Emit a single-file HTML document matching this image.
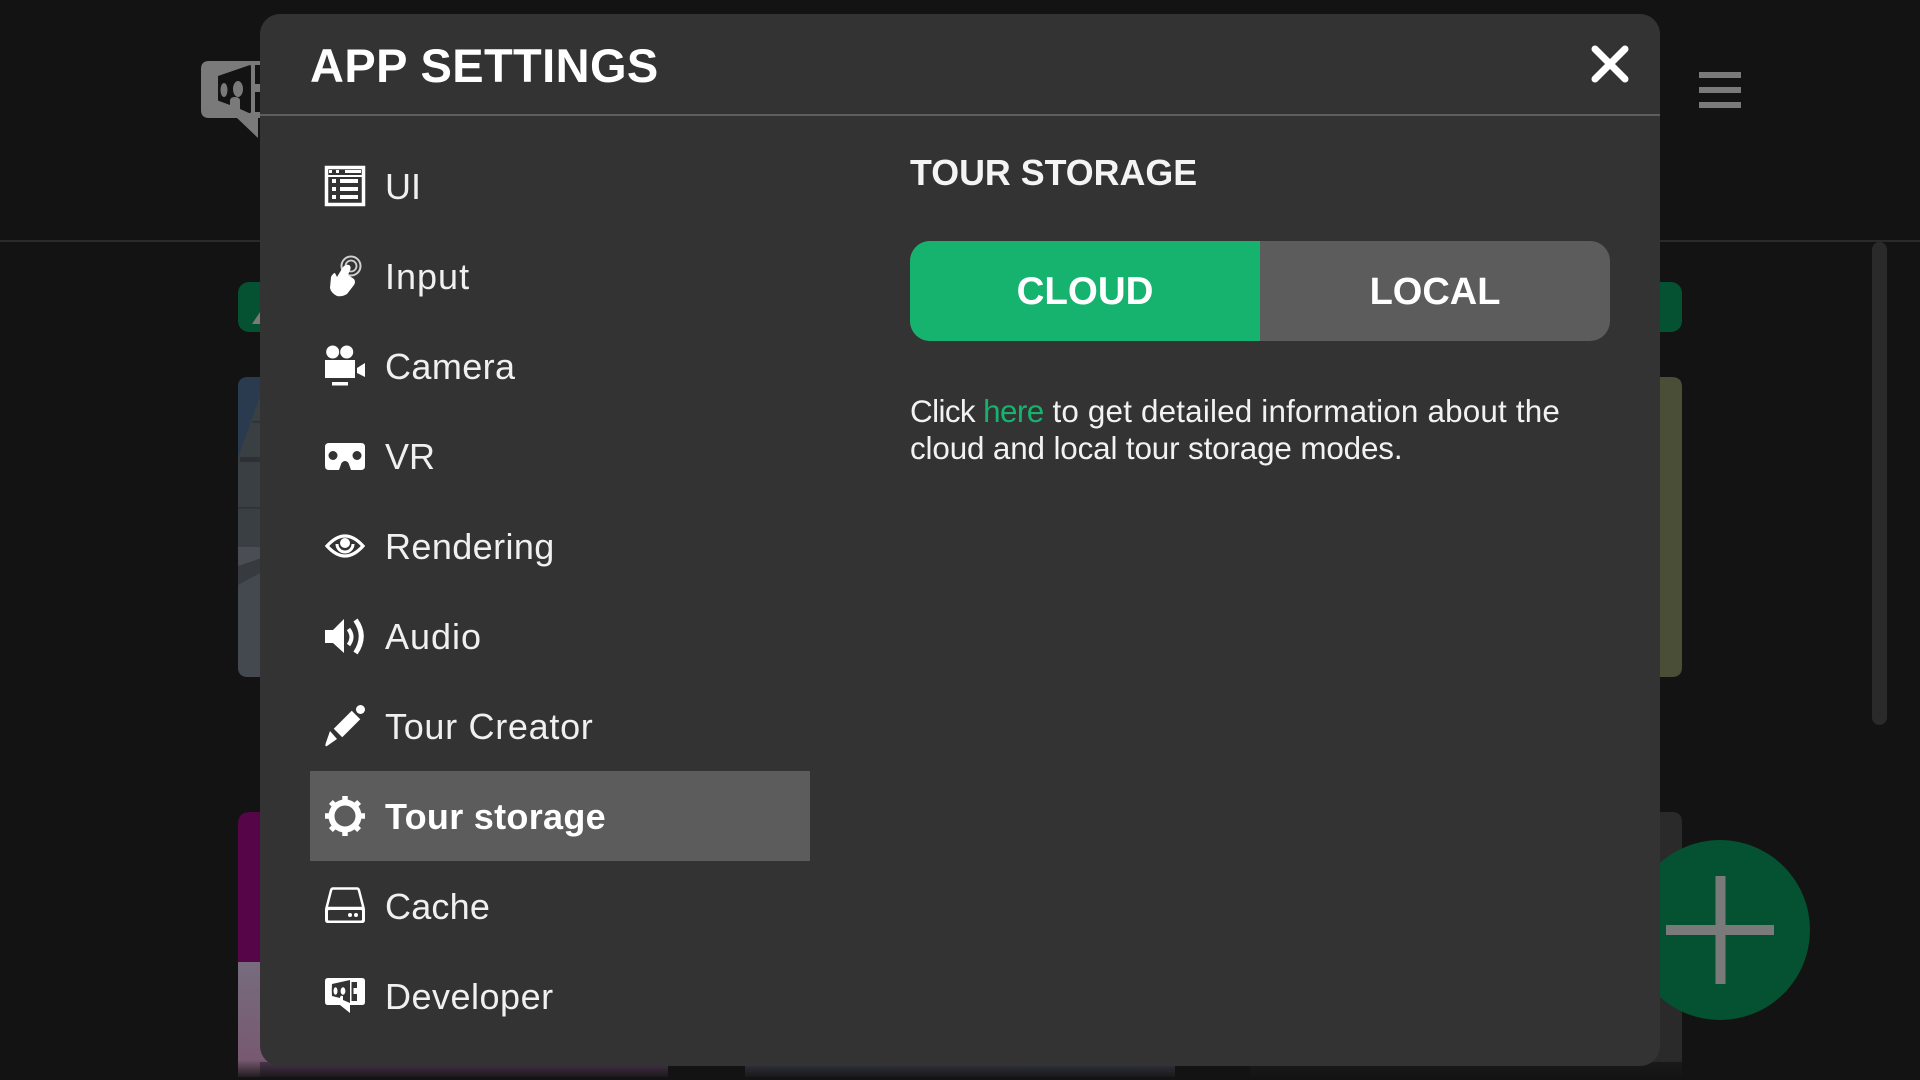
<!DOCTYPE html>
<html lang="en">
<head>
<meta charset="utf-8">
<title>App Settings</title>
<style>
html,body{margin:0;padding:0;width:1920px;height:1080px;overflow:hidden;background:#131313;}
*{box-sizing:border-box;}
body{font-family:"Liberation Sans",sans-serif;color:#f2f2f2;position:relative;}
.a{position:absolute;}
.t{position:absolute;white-space:nowrap;}
.menu{position:absolute;left:385px;font-size:36px;line-height:92px;height:90px;white-space:nowrap;color:#f0f0f0;}
svg{position:absolute;overflow:visible;}
</style>
</head>
<body>
<!-- background page -->
<div class="a" style="left:0;top:240px;width:1920px;height:2px;background:#2a2a2a"></div>
<div class="a" style="left:238px;top:282px;width:1444px;height:50px;border-radius:11px;background:#055232"></div>
<svg style="left:0;top:0" width="1920" height="1080">
  <polygon points="252,324 260,312 260,324" fill="#7a7a7a"/>
  <!-- logo -->
  <path d="M209 61H262V118H258V138L237 118H209Q201 118 201 110V69Q201 61 209 61Z" fill="#7a7a7a"/>
  <path d="M218 76L250 65Q251 65 251 67V112Q251 113 249 113L240 109V101Q240 97 235 97Q230 97 230 101V105L219 101Q218 101 218 99Z" fill="#131313"/>
  <ellipse cx="224" cy="90" rx="3.500" ry="7" fill="#7a7a7a"/>
  <ellipse cx="238" cy="89" rx="5" ry="8" fill="#7a7a7a"/>
  <path d="M255 65H262V84H255ZM255 92H262V112H255Z" fill="#131313"/>
  <!-- hamburger -->
  <rect x="1699" y="72" width="42" height="6" fill="#7a7a7a"/>
  <rect x="1699" y="87" width="42" height="6" fill="#7a7a7a"/>
  <rect x="1699" y="102" width="42" height="6" fill="#7a7a7a"/>
  <!-- scrollbar -->
  <rect x="1872" y="242" width="15" height="483" rx="7.500" fill="#2a2a2a"/>
  <!-- left image sliver -->
  <defs>
    <clipPath id="c1"><path d="M248 377H262V677H248Q238 677 238 667V387Q238 377 248 377Z"/></clipPath>
    <linearGradient id="fade" x1="0" y1="0" x2="0" y2="1"><stop offset="0" stop-color="#131313" stop-opacity="0"/><stop offset="1" stop-color="#131313"/></linearGradient>
    <linearGradient id="pale" x1="0" y1="0" x2="0" y2="1"><stop offset="0" stop-color="#776c7e"/><stop offset="1" stop-color="#77566e"/></linearGradient>
  </defs>
  <g clip-path="url(#c1)">
    <rect x="238" y="377" width="24" height="300" fill="#3a3f43"/>
    <polygon points="238,377 262,377 262,391 238,458" fill="#2a3b50"/>
    <rect x="240" y="457" width="22" height="5" fill="#2d3034"/>
    <rect x="252" y="421" width="10" height="1.500" fill="#2c2f33"/>
    <rect x="238" y="507" width="24" height="1.500" fill="#2e3135"/>
    <polygon points="238,547 262,547 262,558 238,566" fill="#4a4d53"/>
    <polygon points="238,566 262,558 262,572 238,585" fill="#373a3f"/>
    <polygon points="238,585 262,572 262,677 238,677" fill="#44484f"/>
  </g>
  <!-- right image sliver -->
  <path d="M1655 377H1672Q1682 377 1682 387V667Q1682 677 1672 677H1655Z" fill="#4a4e36"/>
  <!-- bottom row -->
  <path d="M250 812H270V962H238V824Q238 812 250 812Z" fill="#550548"/>
  <rect x="238" y="962" width="32" height="115" fill="url(#pale)"/>
  <rect x="260" y="1062" width="408" height="15" fill="#4d3750"/>
  <rect x="745" y="1062" width="430" height="15" fill="#383943"/>
  <path d="M1650 812H1672Q1682 812 1682 822V1077H1650Z" fill="#2a2a2a"/>
  <rect x="1250" y="1062" width="432" height="15" fill="#1a1a1a"/>
  <rect x="230" y="1060" width="1460" height="20" fill="url(#fade)"/>
  <!-- FAB -->
  <circle cx="1720" cy="930" r="90" fill="#055232"/>
  <rect x="1666" y="925" width="108" height="10" fill="#7a7a7a"/>
  <rect x="1715.500" y="876" width="10" height="108" fill="#7a7a7a"/>
</svg>

<!-- modal -->
<div class="a" style="left:260px;top:14px;width:1400px;height:1052px;background:#333;border-radius:20px"></div>
<div class="a" style="left:260px;top:114px;width:1400px;height:2px;background:#5e5e5e"></div>
<div class="t" style="left:310px;top:36px;font-size:47px;line-height:60px;font-weight:700;color:#fff;letter-spacing:.4px">APP SETTINGS</div>
<svg style="left:0;top:0" width="1920" height="1080">
  <path d="M1595 49L1625 79M1625 49L1595 79" stroke="#fff" stroke-width="7" stroke-linecap="round" fill="none"/>
</svg>

<!-- active row -->
<div class="a" style="left:310px;top:771px;width:500px;height:90px;background:#5c5c5c"></div>

<div class="menu" style="top:141px">UI</div>
<div class="menu" style="top:231px;letter-spacing:1px">Input</div>
<div class="menu" style="top:321px;letter-spacing:.4px">Camera</div>
<div class="menu" style="top:411px">VR</div>
<div class="menu" style="top:501px;letter-spacing:.4px">Rendering</div>
<div class="menu" style="top:591px;letter-spacing:1px">Audio</div>
<div class="menu" style="top:681px;letter-spacing:.7px">Tour Creator</div>
<div class="menu" style="top:771px;font-weight:700;color:#fff;letter-spacing:.3px">Tour storage</div>
<div class="menu" style="top:861px;letter-spacing:.2px">Cache</div>
<div class="menu" style="top:951px;letter-spacing:.5px">Developer</div>

<svg style="left:0;top:0" width="1920" height="1080" fill="#fff">
  <!-- UI -->
  <rect x="326.500" y="167.500" width="37" height="37" fill="none" stroke="#fff" stroke-width="3.500"/>
  <rect x="329" y="170" width="3" height="3"/><rect x="336" y="170" width="3" height="3"/><rect x="345" y="170" width="16" height="3"/>
  <rect x="328" y="175" width="34" height="2"/>
  <rect x="332" y="179" width="4" height="4"/><rect x="340" y="179" width="18" height="4"/>
  <rect x="332" y="187" width="4" height="4"/><rect x="340" y="187" width="18" height="4"/>
  <rect x="332" y="195" width="4" height="4"/><rect x="340" y="195" width="18" height="4"/>
  <!-- Input -->
  <circle cx="351" cy="266" r="9.500" fill="none" stroke="#d0d0d0" stroke-width="2"/>
  <circle cx="351" cy="266" r="5.500" fill="none" stroke="#d0d0d0" stroke-width="1.800"/>
  <path d="M343 267Q346 264 349 265Q351 266 350.500 269L348 275L354 279Q356 282 354 285L347 294Q342 297 337 296Q331 293 330 288L331 277Q333 273 335 273L337 277Z"/>
  <!-- Camera -->
  <circle cx="332.700" cy="352" r="6.500"/><circle cx="346.700" cy="352" r="6.500"/>
  <rect x="325" y="360" width="30" height="18"/>
  <polygon points="357,368 365,363 365,377 357,373"/>
  <rect x="332" y="382" width="16" height="3.500"/>
  <!-- VR -->
  <path fill-rule="evenodd" d="M329 443H361Q365 443 365 447V466Q365 470 361 470H351L348.500 463Q345 459 341.500 463L339 470H329Q325 470 325 466V447Q325 443 329 443ZM333 451A4.500 4.500 0 1 0 333 460A4.500 4.500 0 1 0 333 451ZM357 451A4.500 4.500 0 1 0 357 460A4.500 4.500 0 1 0 357 451Z"/>
  <!-- Eye -->
  <path d="M327 546Q345 526 363 546Q345 566 327 546Z" fill="none" stroke="#fff" stroke-width="3.200"/>
  <path d="M337 544A8 8 0 1 0 353 544" fill="none" stroke="#fff" stroke-width="3"/>
  <circle cx="345" cy="543" r="5"/>
  <!-- Audio -->
  <path d="M325 630H333L344 619V653L333 643H325Z"/>
  <path d="M348.500 629Q354.500 637 348.500 645" fill="none" stroke="#fff" stroke-width="4"/>
  <path d="M355.500 620Q367 636 355.500 653" fill="none" stroke="#fff" stroke-width="5"/>
  <!-- Pencil -->
  <path d="M338 733L356 715" stroke="#fff" stroke-width="12" fill="none"/>
  <circle cx="360.500" cy="709.500" r="4.500"/>
  <path d="M330 731L337 739L327 746Q325 747 325.500 744Z"/>
  <!-- Gear -->
  <circle cx="345" cy="816" r="13.500" fill="none" stroke="#fff" stroke-width="6"/>
  <g stroke="#fff" stroke-width="5.500" stroke-linecap="butt">
    <path d="M345 796V803M345 829V836M325 816H332M358 816H365M330.900 801.900L336 807M354 825L359.100 830.100M359.100 801.900L354 807M336 825L330.900 830.100"/>
  </g>
  <!-- Cache -->
  <path d="M333 888.500H357Q358.500 888.500 359 890.500L363.500 908H326.500L331 890.500Q331.500 888.500 333 888.500Z" fill="none" stroke="#fff" stroke-width="2.500"/>
  <path fill-rule="evenodd" d="M328 907H362Q365 907 365 910V920Q365 923 362 923H328Q325 923 325 920V910Q325 907 328 907ZM329 910Q328 910 328 911V919.500Q328 920.500 329 920.500H361Q362 920.500 362 919.500V911Q362 910 361 910Z"/>
  <circle cx="350" cy="915" r="2"/><circle cx="356" cy="915" r="2"/>
  <!-- Developer -->
  <path d="M328 978H362Q365 978 365 981V1002Q365 1005 362 1005H350L350 1013L340 1005H328Q325 1005 325 1002V981Q325 978 328 978Z"/>
  <path d="M332 984L350 980V1003L343 1000V996Q340 995 340 998L332 996Q331.500 990 332 984Z" fill="#333"/>
  <ellipse cx="335.500" cy="991" rx="2" ry="3.800"/>
  <ellipse cx="343" cy="991" rx="2.400" ry="3.800"/>
  <path d="M351.500 982H357V988H353.500V994H357V1001H351.500Z" fill="#333"/>
</svg>

<!-- right pane -->
<div class="t" style="left:910px;top:151px;font-size:35.800px;line-height:44px;font-weight:700;color:#f4f4f4">TOUR STORAGE</div>
<div class="a" style="left:910px;top:241px;width:700px;height:100px;border-radius:20px;overflow:hidden;background:#5c5c5c">
  <div class="a" style="left:0;top:0;width:350px;height:100px;background:#16b36e"></div>
  <div class="a" style="left:0;top:1px;width:350px;height:100px;line-height:100px;text-align:center;font-size:38.500px;font-weight:700;color:#fff">CLOUD</div>
  <div class="a" style="left:350px;top:1px;width:350px;height:100px;line-height:100px;text-align:center;font-size:38px;font-weight:700;color:#fff">LOCAL</div>
</div>
<div class="t" style="left:910px;top:393px;font-size:31.400px;line-height:38px;color:#f2f2f2"><span style="letter-spacing:-.6px">Click </span><span style="color:#16b36e;letter-spacing:-.6px">here</span><span style="letter-spacing:.18px"> to get detailed information about the</span></div>
<div class="t" style="left:910px;top:430px;font-size:31.400px;line-height:38px;color:#f2f2f2;letter-spacing:-.14px">cloud and local tour storage modes.</div>
</body>
</html>
